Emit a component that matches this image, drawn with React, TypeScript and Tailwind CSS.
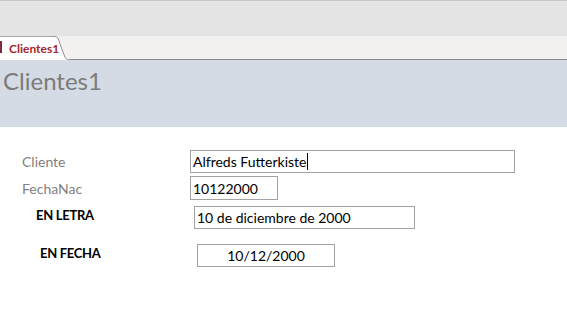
const font = { fontFamily: '"Lato", "Liberation Sans", sans-serif' };

const Field = ({
  label,
  value,
  labelClass,
  boxClass,
  rowClass,
  cursor,
}: {
  label: string;
  value: string;
  labelClass: string;
  boxClass: string;
  rowClass: string;
  cursor?: boolean;
}) => (
  <div className={`flex items-center ${rowClass}`}>
    <div className={labelClass}>{label}</div>
    <div className={`flex items-center border border-[#a3a3a3] text-[14px] text-black ${boxClass}`}>
      <span>{value}</span>
      {cursor && <span className="ml-px inline-block h-[17px] w-px bg-black" />}
    </div>
  </div>
);

export default function App() {
  return (
    <div className="h-[328px] w-[567px] overflow-hidden bg-white" style={font}>
      {/* ribbon remnant */}
      <div className="h-[36px] border-t border-[#c6c6c6] bg-[#e4e4e4]" />

      {/* tab strip */}
      <div className="flex h-[24px] bg-[#f2f1ef]">
        <div className="relative flex w-[53px] items-center border-t border-[#a8a8a8] bg-white pl-[9px]">
          <span className="absolute left-0 top-[4px] h-[12px] w-[2px] bg-[#7b2a3a]" />
          <span className="text-[12px] font-bold leading-none text-[#a4262c]">Clientes1</span>
        </div>
        <svg width="18" height="24" viewBox="0 0 18 24" className="block">
          <path d="M0 0.5 L1 0.5 C5 0.5 5 2 7 8 L11.5 20 C13 23.5 13.5 23.5 15.5 23.5 L18 23.5 L18 24 L0 24 Z" fill="#ffffff" />
          <path d="M0 0.5 L1 0.5 C5 0.5 5 2 7 8 L11.5 20 C13 23.5 13.5 23.5 15.5 23.5 L18 23.5" fill="none" stroke="#8e8e8e" strokeWidth="1" />
        </svg>
        <div className="flex-1 border-b border-[#8a8a8a]" />
      </div>

      {/* form header */}
      <div className="h-[67px] bg-[#d5dbe4] pl-[3px] pt-[4px]">
        <div className="text-[24px] leading-[34px] text-[#7b7b7b]">Clientes1</div>
      </div>

      {/* detail */}
      <div className="flex flex-col pt-[23px]">
        <Field
          rowClass="h-[23px]"
          label="Cliente"
          labelClass="w-[190px] pl-[22px] text-[14px] text-[#7f7f7f]"
          boxClass="h-[23px] w-[325px] pl-[2px]"
          value="Alfreds Futterkiste"
          cursor
        />
        <Field
          rowClass="mt-[3px] h-[24px]"
          label="FechaNac"
          labelClass="w-[190px] pl-[22px] text-[14px] text-[#7f7f7f]"
          boxClass="h-[24px] w-[88px] pl-[2px]"
          value="10122000"
        />
        <Field
          rowClass="mt-[6px] h-[23px]"
          label="EN LETRA"
          labelClass="w-[194px] pl-[36px] pb-[4px] text-[13px] font-bold tracking-[-0.3px] text-black"
          boxClass="h-[23px] w-[221px] pl-[2px]"
          value="10 de diciembre de 2000"
        />
        <Field
          rowClass="mt-[15px] h-[23px]"
          label="EN FECHA"
          labelClass="w-[197px] pl-[40px] pb-[4px] text-[13px] font-bold tracking-[-0.3px] text-black"
          boxClass="h-[23px] w-[138px] justify-center"
          value="10/12/2000"
        />
      </div>
    </div>
  );
}
